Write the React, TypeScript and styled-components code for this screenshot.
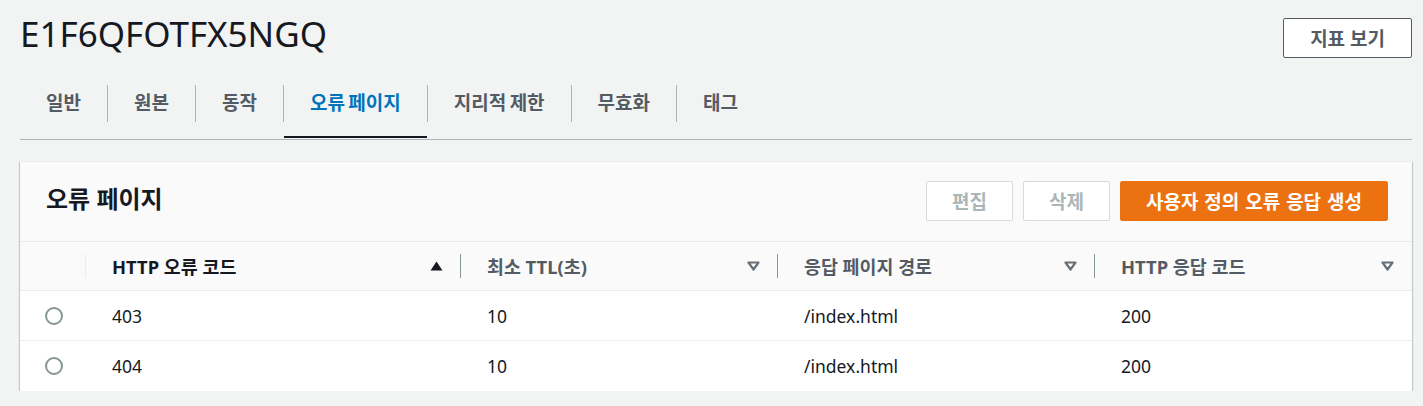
import React from "react";
import styled, { createGlobalStyle } from "styled-components";

const GlobalStyle = createGlobalStyle`
  html, body {
    margin: 0;
    padding: 0;
    background: #f2f3f3;
  }
  body {
    font-family: "Noto Sans", "Noto Sans CJK KR", sans-serif;
    color: #16191f;
  }
  * {
    box-sizing: border-box;
  }
`;

const Page = styled.div`
  padding: 0 11px 0 20px;
`;

const TitleRow = styled.div`
  display: flex;
  justify-content: space-between;
  align-items: flex-start;
  padding-top: 13px;
`;

const Title = styled.h1`
  margin: 0;
  font-size: 35px;
  line-height: 42px;
  font-weight: 400;
  color: #16191f;
`;

const OutlineButton = styled.button`
  margin-top: 5px;
  height: 40px;
  padding: 0 26px;
  background: #fff;
  border: 1px solid #545b64;
  border-radius: 2px;
  color: #545b64;
  font-family: inherit;
  font-size: 19px;
  font-weight: 700;
`;

const TabBar = styled.div`
  display: flex;
  border-bottom: 1px solid #aab7b8;
`;

const Tab = styled.div<{ $first?: boolean }>`
  padding: 27px 0 17px;
  display: flex;
  & > span {
    border-left: ${(p) => (p.$first ? "none" : "1px solid #aab7b8")};
  }
`;

const TabLabel = styled.span<{ $active?: boolean }>`
  position: relative;
  display: block;
  height: 37px;
  line-height: 36px;
  padding: 0 26px;
  font-size: 19px;
  font-weight: 700;
  word-spacing: -1.5px;
  color: ${(p) => (p.$active ? "#0073bb" : "#545b64")};
  white-space: nowrap;

  &::after {
    content: "";
    display: ${(p) => (p.$active ? "block" : "none")};
    position: absolute;
    left: 0;
    right: 0;
    bottom: -16px;
    height: 2px;
    background: #16191f;
  }
`;

const Card = styled.section`
  margin-top: 21px;
  background: #fff;
  border-top: 1px solid #eaeded;
  box-shadow: 0 1px 1px 0 rgba(0, 28, 36, 0.3),
    1px 1px 1px 0 rgba(0, 28, 36, 0.15),
    -1px 1px 1px 0 rgba(0, 28, 36, 0.15);
`;

const CardHeader = styled.div`
  display: flex;
  align-items: center;
  justify-content: space-between;
  padding: 19px 24px 20px 26px;
  background: #fafafa;
  border-bottom: 1px solid #eaeded;
`;

const CardTitle = styled.h2`
  margin: 0 0 5px;
  font-size: 24px;
  line-height: 30px;
  font-weight: 700;
  color: #16191f;
`;

const Actions = styled.div`
  display: flex;
  gap: 10px;
`;

const ActionButton = styled.button<{ $primary?: boolean }>`
  height: 40px;
  padding: 0 25px;
  border-radius: 2px;
  font-family: inherit;
  font-size: 19px;
  font-weight: 700;
  background: ${(p) => (p.$primary ? "#ec7211" : "#fff")};
  border: 1px solid ${(p) => (p.$primary ? "#ec7211" : "#d5dbdb")};
  color: ${(p) => (p.$primary ? "#fff" : "#aab7b8")};
  word-spacing: ${(p) => (p.$primary ? "1px" : "0")};
`;

const Row = styled.div<{ $head?: boolean; $last?: boolean }>`
  display: grid;
  grid-template-columns: 66px 375px repeat(3, 1fr);
  height: ${(p) => (p.$head ? "49px" : "50px")};
  background: ${(p) => (p.$head ? "#fafafa" : "#fff")};
  border-bottom: ${(p) => (p.$last ? "none" : "1px solid #eaeded")};
`;

const HeadCell = styled.div<{ $sep?: string; $dark?: boolean }>`
  position: relative;
  display: flex;
  align-items: center;
  justify-content: space-between;
  padding: 0 18px 0 26px;
  font-size: 18.4px;
  font-weight: 700;
  color: ${(p) => (p.$dark ? "#16191f" : "#545b64")};

  &::after {
    content: "";
    display: ${(p) => (p.$sep ? "block" : "none")};
    position: absolute;
    right: 0;
    top: 12px;
    bottom: 12px;
    width: 1px;
    background: ${(p) => p.$sep};
  }
`;

const Cell = styled.div`
  display: flex;
  align-items: center;
  padding-left: 26px;
  font-size: 17.5px;
  color: #16191f;
`;

const RadioCell = styled.div`
  display: flex;
  align-items: center;
  justify-content: center;
  padding-left: 2px;
`;

const Radio = styled.span`
  width: 18px;
  height: 18px;
  border-radius: 50%;
  border: 2px solid #879596;
  background: #fff;
`;

const SortUp = () => (
  <svg width="13" height="10" viewBox="0 0 13 10">
    <polygon points="6.5,0.5 12.5,9.5 0.5,9.5" fill="#16191f" />
  </svg>
);

const SortDown = () => (
  <svg width="13" height="10" viewBox="0 0 13 10">
    <polygon
      points="1.5,1.5 11.5,1.5 6.5,8.5"
      fill="#fafafa"
      stroke="#687078"
      strokeWidth="2.2"
      strokeLinejoin="round"
    />
  </svg>
);

const tabs = ["일반", "원본", "동작", "오류 페이지", "지리적 제한", "무효화", "태그"];

const rows = [
  { code: "403", ttl: "10", path: "/index.html", resp: "200" },
  { code: "404", ttl: "10", path: "/index.html", resp: "200" },
];

export default function App() {
  return (
    <Page>
      <GlobalStyle />
      <TitleRow>
        <Title>E1F6QFOTFX5NGQ</Title>
        <OutlineButton>지표 보기</OutlineButton>
      </TitleRow>

      <TabBar>
        {tabs.map((t, i) => (
          <Tab key={t} $first={i === 0}>
            <TabLabel $active={t === "오류 페이지"}>{t}</TabLabel>
          </Tab>
        ))}
      </TabBar>

      <Card>
        <CardHeader>
          <CardTitle>오류 페이지</CardTitle>
          <Actions>
            <ActionButton disabled>편집</ActionButton>
            <ActionButton disabled>삭제</ActionButton>
            <ActionButton $primary>사용자 정의 오류 응답 생성</ActionButton>
          </Actions>
        </CardHeader>

        <Row $head>
          <HeadCell $sep="#eaeded" />
          <HeadCell $sep="#879596" $dark>
            HTTP 오류 코드
            <SortUp />
          </HeadCell>
          <HeadCell $sep="#879596">
            최소 TTL(초)
            <SortDown />
          </HeadCell>
          <HeadCell $sep="#879596">
            응답 페이지 경로
            <SortDown />
          </HeadCell>
          <HeadCell>
            HTTP 응답 코드
            <SortDown />
          </HeadCell>
        </Row>

        {rows.map((r, i) => (
          <Row key={r.code} $last={i === rows.length - 1}>
            <RadioCell>
              <Radio />
            </RadioCell>
            <Cell>{r.code}</Cell>
            <Cell>{r.ttl}</Cell>
            <Cell>{r.path}</Cell>
            <Cell>{r.resp}</Cell>
          </Row>
        ))}
      </Card>
    </Page>
  );
}
